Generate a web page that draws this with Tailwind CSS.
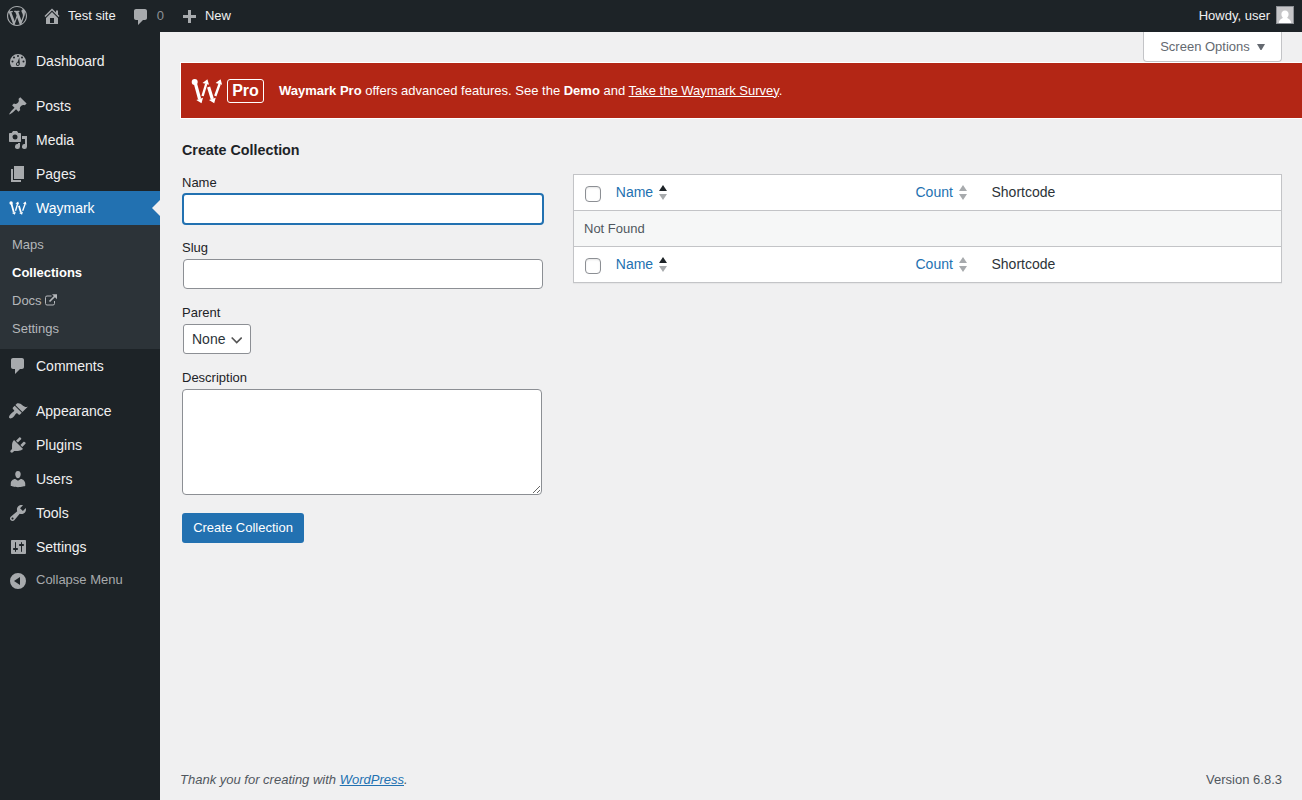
<!DOCTYPE html>
<html lang="en">
<head>
<meta charset="utf-8">
<title>Collections ‹ Test site — WordPress</title>
<script src="https://cdn.jsdelivr.net/npm/@tailwindcss/browser@4"></script>
</head>
<body class="flex h-[800px] flex-col overflow-hidden bg-[#f0f0f1] font-['Liberation_Sans',sans-serif] text-[13px] leading-[18px] text-[#3c434a]">
<svg class="hidden">
  <symbol id="comment" viewBox="0 0 20 20"><path d="M5 2h9c1.1 0 2 .9 2 2v7c0 1.1-.9 2-2 2h-2l-5 5v-5H5c-1.1 0-2-.9-2-2V4c0-1.100.9-2 2-2z"/></symbol>
  <symbol id="waymark" viewBox="0 0 32 26"><g fill="none" stroke="currentColor"><path stroke-width="3.200" d="M4 4l4.600 17M17.600 9l3.700 12"/><path stroke-width="2.400" d="M11.600 18l3.600-12M24.300 18l4.300-12"/></g><g fill="currentColor"><circle cx="3.700" cy="4" r="3"/><path d="M5.300 22l6.700-2.200-1.500 5.400zM11.500 5l4.900-3.700L18 6.800zM18 22l6.700-2.200-1.500 5.400zM24.600 5l5-3.700 1.500 5.500z"/></g></symbol>
</svg>

<header class="flex h-8 shrink-0 items-center justify-between bg-[#1d2327] pr-2 text-[#f0f0f1]">
  <div class="flex h-8 items-center">
    <svg class="ml-[7px] size-5 fill-[#a7aaad]" viewBox="0 0 20 20"><path d="M20 10c0-5.510-4.490-10-10-10C4.480 0 0 4.490 0 10c0 5.520 4.480 10 10 10 5.510 0 10-4.480 10-10zM7.780 15.370L4.370 6.220c.55-.02 1.170-.08 1.170-.08.5-.06.44-1.130-.06-1.110 0 0-1.450.11-2.370.11-.18 0-.37 0-.58-.01C4.120 2.690 6.870 1.110 10 1.110c2.330 0 4.450.87 6.050 2.340-.68-.11-1.650.39-1.650 1.580 0 .74.45 1.360.9 2.100.35.61.55 1.360.55 2.460 0 1.490-1.400 5-1.400 5l-3.030-8.370c.54-.02.82-.17.82-.17.5-.05.44-1.250-.06-1.220 0 0-1.440.12-2.380.12-.87 0-2.330-.12-2.330-.12-.5-.03-.56 1.200-.06 1.220l.92.08 1.260 3.410zM17.410 10c.24-.64.74-1.870.43-4.250.7 1.290 1.050 2.710 1.050 4.250 0 3.290-1.730 6.240-4.400 7.780.97-2.590 1.940-5.200 2.920-7.780zM6.100 18.090C3.120 16.650 1.110 13.530 1.110 10c0-1.300.23-2.480.72-3.590C3.250 10.300 4.670 14.200 6.100 18.090zm4.030-6.630l2.580 6.980c-.86.29-1.760.45-2.710.45-.79 0-1.570-.11-2.290-.33.810-2.380 1.620-4.740 2.420-7.100z"/></svg>
    <svg class="ml-[15px] size-5 fill-[#a7aaad]" viewBox="0 0 20 20"><path d="M16 8.500l1.530 1.530-1.060 1.060L10 4.600l-6.470 6.490-1.060-1.060L10 2.500l4 4v-2h2v4zm-6-2.460l6 5.990V18H4v-5.970zM12 17v-5H8v5h4z"/></svg>
    <span class="ml-[6px]">Test site</span>
    <svg class="mt-[2px] ml-[15px] size-5 fill-[#a7aaad]"><use href="#comment"/></svg>
    <span class="ml-[6px] text-[#8c9196]">0</span>
    <svg class="ml-[15px] size-5 fill-[#a7aaad]" viewBox="0 0 20 20"><path d="M17 9h-5V4H9v5H4v3h5v5h3v-5h5z"/></svg>
    <span class="ml-[6px]">New</span>
  </div>
  <div class="flex items-center">
    <span>Howdy, user</span>
    <svg class="mb-[2px] ml-[6px] size-[18px]" viewBox="0 0 18 18"><path fill="#8c8f94" d="M0 0h18v18H0z"/><path fill="#c5c5c7" d="M1 1h16v16H1z"/><path fill="#fff" d="M9 4.500c2.500 0 3.600 1.800 3.600 3.800 0 1.500-.7 2.700-1.500 3.500.6 1 3.900 1.400 4.100 5.200H2.800c.2-3.800 3.500-4.200 4.100-5.200-.8-.8-1.500-2-1.500-3.500 0-2 1.100-3.800 3.600-3.800z"/></svg>
  </div>
</header>

<div class="flex min-h-0 flex-1">
  <nav class="flex w-40 shrink-0 flex-col bg-[#1d2327] pt-3 text-[14px] text-[#f0f0f1]">
    <a class="flex h-[34px] items-center gap-2 pl-2"><svg class="size-5 fill-[#a7aaad]" viewBox="0 0 20 20"><path fill-rule="evenodd" d="M3.760 16h12.480A7.980 7.980 0 0 0 18 11a8 8 0 0 0-16 0c0 1.890.66 3.630 1.760 5zM10 4a1 1 0 1 1 0 2 1 1 0 0 1 0-2zM6 5.500a1 1 0 1 1 0 2 1 1 0 0 1 0-2zm8 0a1 1 0 1 1 0 2 1 1 0 0 1 0-2zM4.500 9.500a1 1 0 1 1 0 2 1 1 0 0 1 0-2zm11 0a1 1 0 1 1 0 2 1 1 0 0 1 0-2zM11.300 6.500l.5 6.100c.2 1.100-.6 2.400-2 2.400s-2.100-1.200-1.800-2.300c.2-.8.900-1.300 1.500-1.500zm-1.500 5.500a1 1 0 1 0 0 2 1 1 0 0 0 0-2z"/></svg>Dashboard</a>
    <a class="mt-[11px] flex h-[34px] items-center gap-2 pl-2"><svg class="size-5 fill-[#a7aaad]" viewBox="0 0 20 20"><path d="M10.440 3.020l1.820-1.820 6.360 6.350-1.830 1.820c-1.050-.68-2.480-.57-3.410.36l-.75.75c-.92.93-1.040 2.350-.35 3.410l-1.830 1.820-2.410-2.410-2.800 2.790c-.42.42-3.380 2.710-3.800 2.290s1.860-3.390 2.280-3.810l2.790-2.790L4.100 9.360l1.830-1.820c1.050.69 2.480.57 3.400-.36l.75-.75c.93-.92 1.050-2.350.36-3.410z"/></svg>Posts</a>
    <a class="flex h-[34px] items-center gap-2 pl-2"><svg class="size-5 fill-[#a7aaad]" viewBox="0 0 20 20"><path fill-rule="evenodd" d="M13 11V4c0-.55-.45-1-1-1h-1.670L9 1H5L3.670 3H2c-.55 0-1 .45-1 1v7c0 .55.45 1 1 1h10c.55 0 1-.45 1-1zM7 4.500a2.500 2.500 0 1 1 0 5 2.500 2.500 0 0 1 0-5zM14 6h5v10.500a2.500 2.500 0 1 1-2-2.450V9h-3V6zm-4 8.050V13h2v3.500a2.500 2.500 0 1 1-2-2.450z"/></svg>Media</a>
    <a class="flex h-[34px] items-center gap-2 pl-2"><svg class="size-5 fill-[#a7aaad]" viewBox="0 0 20 20"><path d="M6 15V2h10v13H6zm-1 1h8v2H3V5h2v11z"/></svg>Pages</a>
    <a class="flex h-[34px] items-center bg-[#2271b1] pl-2 text-white"><svg class="mr-2 size-5 text-white" viewBox="0 0 20 20"><use href="#waymark" x="1" y="2.500" width="18" height="15"/></svg>Waymark<svg class="ml-auto h-4 w-2 fill-[#f0f0f1]" viewBox="0 0 8 16"><path d="M8 0v16L0 8z"/></svg></a>
    <div class="flex h-[124px] flex-col bg-[#2c3338] pt-[6px] pl-3 text-[13px] text-[#b4b7ba]">
      <a class="flex h-7 items-center">Maps</a>
      <a class="flex h-7 items-center font-bold text-white">Collections</a>
      <a class="flex h-7 items-center gap-[3px]">Docs <svg class="mb-[2px] h-3 w-3 fill-none stroke-current" viewBox="0.5 0 12 12"><path d="M7 2H2.500Q1 2 1 3.500v6Q1 11 2.500 11h6Q10 11 10 9.500V7"/><path stroke-width="1.700" d="M5 7.500L10.500 2"/><path fill="currentColor" stroke="none" d="M7.500.3h5v5z"/></svg></a>
      <a class="flex h-7 items-center">Settings</a>
    </div>
    <a class="flex h-[34px] items-center gap-2 pl-2"><svg class="size-5 fill-[#a7aaad]"><use href="#comment"/></svg>Comments</a>
    <a class="mt-[11px] flex h-[34px] items-center gap-2 pl-2"><svg class="size-5 fill-[#a7aaad]" viewBox="0 0 20 20"><path d="M14.480 11.060L7.410 3.990l1.500-1.500c.5-.56 2.300-.47 3.510.32 1.210.8 1.430 1.280 2.910 2.100 1.180.64 2.450 1.260 4.450.85zm-.71.71L6.700 4.700 4.930 6.470c-.39.39-.39 1.020 0 1.410l1.060 1.060c.39.39.39 1.030 0 1.420-.6.6-1.430 1.110-2.210 1.690-.35.26-.7.53-1.010.84C1.430 14.230.4 16.080 1.400 17.070c.99 1 2.840-.03 4.180-1.360.31-.31.58-.66.850-1.020.57-.78 1.080-1.610 1.690-2.210.39-.39 1.020-.39 1.410 0l1.060 1.060c.39.39 1.020.39 1.410 0z"/></svg>Appearance</a>
    <a class="flex h-[34px] items-center gap-2 pl-2"><svg class="size-5 fill-[#a7aaad]" viewBox="0 0 20 20"><path d="M13.110 4.360L9.870 7.600 8 5.730l3.240-3.240c.35-.34 1.050-.2 1.560.32.52.51.66 1.210.31 1.550zm-8 1.770l.91-1.120 9.010 9.010-1.190.84c-.71.71-2.630 1.160-3.820 1.160H6.140L4.900 17.260c-.59.59-1.540.59-2.120 0-.59-.58-.59-1.530 0-2.120l1.240-1.240v-3.880c0-1.130.4-3.190 1.090-3.890zm7.260 3.970l3.240-3.240c.34-.35 1.040-.21 1.550.31.52.51.66 1.210.31 1.550l-3.240 3.250z"/></svg>Plugins</a>
    <a class="flex h-[34px] items-center gap-2 pl-2"><svg class="size-5 fill-[#a7aaad]" viewBox="0 0 20 20"><path d="M10 9.250c-2.270 0-2.730-3.440-2.730-3.440C7 4.020 7.820 2 9.970 2c2.160 0 2.980 2.020 2.710 3.810 0 0-.41 3.440-2.680 3.440zm0 2.570L12.720 10c2.390 0 4.520 2.330 4.520 4.530v2.490s-3.650 1.130-7.240 1.130c-3.650 0-7.240-1.130-7.240-1.130v-2.490c0-2.250 1.940-4.480 4.470-4.480z"/></svg>Users</a>
    <a class="flex h-[34px] items-center gap-2 pl-2"><svg class="size-5 fill-[#a7aaad]" viewBox="0 0 20 20"><path fill-rule="evenodd" d="M16.680 9.770c-1.340 1.340-3.300 1.670-4.950.99l-5.410 6.520c-.99.99-2.590.99-3.580 0s-.99-2.590 0-3.570l6.520-5.420c-.68-1.650-.35-3.610.99-4.950 1.280-1.280 3.120-1.620 4.720-1.060l-2.890 2.890 2.820 2.820 2.860-2.870c.53 1.580.18 3.390-1.080 4.650zM3.810 16.210c.4.390 1.040.390 1.430 0 .4-.4.4-1.040 0-1.430-.39-.4-1.030-.4-1.430 0-.39.390-.39 1.030 0 1.430z"/></svg>Tools</a>
    <a class="flex h-[34px] items-center gap-2 pl-2"><svg class="size-5 fill-[#a7aaad]" viewBox="0 0 20 20"><path fill-rule="evenodd" d="M18 16V4c0-.55-.45-1-1-1H4c-.55 0-1 .45-1 1v12c0 .55.45 1 1 1h13c.55 0 1-.45 1-1zM8 11h1c.55 0 1 .45 1 1s-.45 1-1 1H8v1.500c0 .28-.22.5-.5.5s-.5-.22-.5-.5V13H6c-.55 0-1-.45-1-1s.45-1 1-1h1V5.500c0-.28.22-.5.5-.5s.5.22.5.5V11zm5-2h-1c-.55 0-1-.45-1-1s.45-1 1-1h1V5.500c0-.28.22-.5.5-.5s.5.22.5.5V7h1c.55 0 1 .45 1 1s-.45 1-1 1h-1v5.500c0 .28-.22.5-.5.5s-.5-.22-.5-.5V9z"/></svg>Settings</a>
    <a class="flex h-[34px] items-center gap-2 pl-2 text-[13px] text-[#a7aaad]"><svg class="size-5 fill-[#a7aaad]" viewBox="0 0 20 20"><path fill-rule="evenodd" d="M10 2a8 8 0 1 1 0 16 8 8 0 0 1 0-16zm2 4l-6 4 6 4z"/></svg><span class="mb-[2px]">Collapse Menu</span></a>
  </nav>

  <main class="flex min-w-0 flex-1 flex-col">
    <div class="flex h-[30px] shrink-0 justify-end pr-5">
      <button class="flex h-[30px] w-[139px] items-center justify-center gap-[7px] rounded-b border border-t-0 border-[#c3c4c7] bg-white text-[#646970]">Screen Options<svg class="h-[6px] w-2 fill-current" viewBox="0 0 8 6"><path d="M0 0h8L4.500 6h-1z"/></svg></button>
    </div>
    <div class="ml-5 flex h-[57px] shrink-0 items-center border border-r-0 border-white bg-[#b32615] pl-[10px] text-white">
      <svg class="h-[26px] w-8" viewBox="0 0 32 26"><use href="#waymark"/></svg>
      <b class="ml-1 flex h-6 w-[37px] items-center justify-center rounded-[3px] border border-white text-[16px]">Pro</b>
      <p class="ml-[15px]"><b>Waymark Pro</b> offers advanced features. See the <b>Demo</b> and <a class="underline">Take the Waymark Survey</a>.</p>
    </div>

    <div class="flex flex-1 pr-5 pl-[22px]">
      <form class="flex w-[391px] flex-col items-start text-[#1d2327]">
        <h2 class="mt-[22px] h-[18px] text-[14.3px] font-bold">Create Collection</h2>
        <label class="mt-[15px] h-[18px]">Name</label>
        <input class="mt-[1px] h-8 w-[362px] rounded-[4px] border-2 border-[#2271b1] bg-white px-2 outline-none">
        <label class="mt-[14px] h-[18px]">Slug</label>
        <input class="mt-[2px] ml-px h-[30px] w-[360px] rounded-[4px] border border-[#8c8f94] bg-white px-2">
        <label class="mt-[15px] h-[18px]">Parent</label>
        <div class="mt-[2px] ml-px flex h-[30px] w-[68px] items-center gap-[5px] rounded-[3px] border border-[#8c8f94] bg-white pl-2 text-[14px] text-[#2c3338]">None<svg class="mt-px h-4 w-3 fill-none stroke-[#555]" viewBox="0 0 12 16"><path stroke-width="1.700" d="M1.700 5.500l5 5 5-5"/></svg></div>
        <label class="mt-[15px] h-[18px]">Description</label>
        <textarea class="mt-[2px] h-[106px] w-[360px] resize rounded-[4px] border border-[#8c8f94] bg-white"></textarea>
        <button type="button" class="mt-[18px] h-[30px] w-[122px] rounded-[3px] bg-[#2271b1] text-white">Create Collection</button>
      </form>

      <div class="mt-[55px] h-[109px] flex-1 border border-[#c3c4c7] bg-white text-[14px] shadow-[0_1px_1px_rgba(0,0,0,.04)]">
        <div class="grid h-9 grid-cols-[41.8px_299.7px_76px_1fr] border-b border-[#c3c4c7] text-[#2c3338]">
          <span class="mt-[11px] ml-[11px] size-4 rounded-[4px] border border-[#8c8f94] bg-white shadow-[inset_0_1px_2px_rgba(0,0,0,.1)]"></span>
          <a class="flex h-[34px] items-center gap-[6px] text-[#2271b1]">Name<svg class="h-[15px] w-2" viewBox="0 0 8 15"><path fill="#1d2327" d="M4 0l4 6H0z"/><path fill="#a7aaad" d="M4 15l4-6H0z"/></svg></a>
          <a class="flex h-[34px] items-center gap-[6px] text-[#2271b1]">Count<svg class="h-[15px] w-2" viewBox="0 0 8 15"><path fill="#a7aaad" d="M4 0l4 6H0zM4 15l4-6H0z"/></svg></a>
          <span class="flex h-[34px] items-center">Shortcode</span>
        </div>
        <div class="flex h-9 items-center border-b border-[#c3c4c7] bg-[#f6f7f7] pl-[10px] text-[13px] text-[#50575e]">Not Found</div>
        <div class="grid h-[35px] grid-cols-[41.8px_299.7px_76px_1fr] text-[#2c3338]">
          <span class="mt-[11px] ml-[11px] size-4 rounded-[4px] border border-[#8c8f94] bg-white shadow-[inset_0_1px_2px_rgba(0,0,0,.1)]"></span>
          <a class="flex h-[34px] items-center gap-[6px] text-[#2271b1]">Name<svg class="h-[15px] w-2" viewBox="0 0 8 15"><path fill="#1d2327" d="M4 0l4 6H0z"/><path fill="#a7aaad" d="M4 15l4-6H0z"/></svg></a>
          <a class="flex h-[34px] items-center gap-[6px] text-[#2271b1]">Count<svg class="h-[15px] w-2" viewBox="0 0 8 15"><path fill="#a7aaad" d="M4 0l4 6H0zM4 15l4-6H0z"/></svg></a>
          <span class="flex h-[34px] items-center">Shortcode</span>
        </div>
      </div>
    </div>
    <footer class="flex h-[29px] shrink-0 justify-between px-5 text-[#50575e]">
      <p class="italic">Thank you for creating with <a class="text-[#2271b1] underline">WordPress</a>.</p>
      <p>Version 6.8.3</p>
    </footer>
  </main>
</div>
</body>
</html>
